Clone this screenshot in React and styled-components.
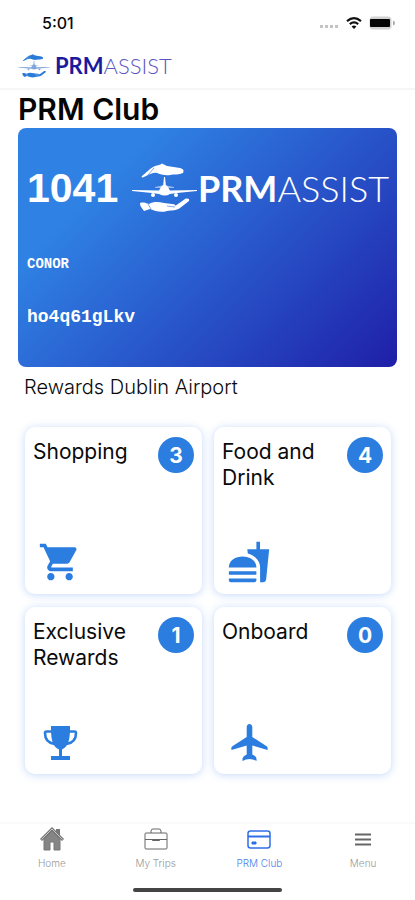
import React from 'react';
import styled, { createGlobalStyle } from 'styled-components';
import { MdShoppingCart, MdFastfood } from 'react-icons/md';

const BLUE = '#2b7de0';
const SANS = "Inter, 'Liberation Sans', sans-serif";

const GlobalStyle = createGlobalStyle`
  *, *::before, *::after { box-sizing: border-box; }
  body { margin: 0; background: #fff; color: #0a0a0a; font-family: ${SANS}; }
  button { font: inherit; color: inherit; }
`;

const Screen = styled.div`
  display: flex;
  flex-direction: column;
  min-height: 100vh;
`;

const StatusBar = styled.div`
  display: flex;
  align-items: center;
  justify-content: space-between;
  height: 46px;
  padding: 0 20px 0 42px;
`;

const Clock = styled.time`
  font-size: 16px;
  font-weight: 500;
`;

const StatusIcons = styled.div`
  display: flex;
  align-items: center;
  gap: 7px;
  svg { display: block; }
  svg:first-child { margin-top: 8px; }
`;

const Header = styled.header`
  display: flex;
  align-items: center;
  height: 44px;
  padding: 0 18px 2px;
  border-bottom: 2px solid #f6f6f7;
`;

const Brand = styled.div`
  display: flex;
  align-items: center;
  gap: ${(p) => (p.$large ? 0 : 5)}px;
  svg { display: block; flex: none; }
`;

const Wordmark = styled.span`
  font-family: Lato, 'Open Sans', sans-serif;
  font-size: ${(p) => (p.$large ? 36 : 22)}px;
  line-height: ${(p) => (p.$large ? 44 : 28)}px;
  font-weight: 300;
  color: ${(p) => (p.$large ? '#fff' : '#5a55c0')};
  strong { font-weight: 700; color: ${(p) => (p.$large ? '#fff' : '#1a1a9c')}; }
`;

const Main = styled.main`
  flex: 1;
  padding: 0 18px 24px;
`;

const Title = styled.h1`
  margin: 0;
  font-size: 30px;
  line-height: 38px;
  font-weight: 600;
  color: #050505;
`;

const MemberCard = styled.section`
  display: flex;
  flex-direction: column;
  height: 239px;
  padding: 35px 8px 0 9px;
  border-radius: 8px;
  background: linear-gradient(135deg, #2f82e4 0%, #2f82e4 22%, #2a5fd0 50%, #1f1fa8 100%);
  color: #fff;
`;

const CardTop = styled.div`
  display: flex;
  align-items: center;
  justify-content: space-between;
  height: 50px;
`;

const Points = styled.span`
  font-family: 'Liberation Sans', Arial, sans-serif;
  font-size: 41px;
  line-height: 50px;
  font-weight: 700;
`;

const CardText = styled.p`
  margin: ${(p) => (p.$code ? 32 : 42)}px 0 0;
  font-family: 'Courier New', 'Liberation Mono', monospace;
  font-weight: 700;
  font-size: ${(p) => (p.$code ? 18 : 14)}px;
  line-height: ${(p) => (p.$code ? 24 : 18)}px;
`;

const SectionTitle = styled.h2`
  margin: 6px 6px 0;
  font-size: 20px;
  line-height: 28px;
  font-weight: 300;
`;

const Grid = styled.div`
  display: grid;
  grid-template-columns: 1fr 1fr;
  gap: 13px 12px;
  margin: 26px 6px 0 7px;
`;

const Tile = styled.button`
  display: flex;
  flex-direction: column;
  justify-content: space-between;
  min-height: 167px;
  padding: 10px 8px;
  border: 0;
  border-radius: 10px;
  background: #fff;
  box-shadow: 0 1px 8px rgba(60, 130, 235, 0.3);
  text-align: left;
`;

const TileHead = styled.span`
  display: flex;
  align-items: flex-start;
  justify-content: space-between;
  width: 100%;
`;

const TileName = styled.span`
  flex: 1;
  padding-top: 2px;
  font-size: 21px;
  line-height: 26px;
  font-weight: 400;
`;

const Count = styled.span`
  display: grid;
  place-items: center;
  flex: none;
  width: 36px;
  height: 36px;
  border-radius: 50%;
  background: ${BLUE};
  color: #fff;
  font-size: 21px;
  font-weight: 700;
`;

const TileIcon = styled.span`
  display: flex;
  padding: 0 5px;
  color: ${BLUE};
  svg { display: block; width: 44px; height: 44px; }
`;

const TabBar = styled.nav`
  display: grid;
  grid-template-columns: repeat(4, 1fr);
  height: 66px;
  border-top: 2px solid #fafafa;
`;

const Tab = styled.a`
  display: flex;
  flex-direction: column;
  align-items: center;
  gap: 4px;
  padding-top: 2px;
  color: ${(p) => (p.$active ? '#4a80ee' : '#999')};
  font-size: 10px;
  line-height: 14px;
  font-weight: 300;
  text-decoration: none;
  svg { display: block; width: 26px; height: 26px; color: ${(p) => (p.$active ? '#2f6fe8' : '#666')}; }
`;

const HomeIndicator = styled.div`
  width: 36%;
  height: 4px;
  margin: 0 auto 8px;
  border-radius: 2px;
  background: #444;
`;

function BrandMark({ width, height, plane, hands }) {
  return (
    <svg width={width} height={height} viewBox="0 0 67 50" aria-hidden="true">
      <g fill={hands}>
        <path d="M11 13 C15 10 19 5 24 3 C27 2 29 2 31 0.500 L36 3 L49 5 C53 6 53 8 52 10 C48 12 43 11 39 12 C34 13 29 11 26 10 C21 9 18 12 13 14 C11 15 10 14 11 13Z" />
        <path d="M9 40 C13 39 14 40 18 41 C23 38 28 39 33 40 L41 41 C44 41 45 42 44 43 L47 41 L54 36 C57 35 59 36 58 38 L49 45 C45 48 41 47 36 48 C30 50 24 48 19 46 L13 48 C12 46 9 44 9 40Z" />
      </g>
      <path d="M23 5 L17 12 M17 41 L20 46 M36 43 L44 44" fill="none" stroke={plane === '#fff' ? '#2d6fd9' : '#fff'} strokeWidth="0.6" />
      <g fill={plane}>
        <path d="M33 14 L34 14 L34.800 22 Q38 24 39 27.500 L66 27 L66 28 L46 30 L39 31 Q34 34 28 31 L21 30 L1 28 L1 27 L28 27.500 Q29 24 32.200 22Z" />
        <circle cx="22" cy="32" r="2" />
        <circle cx="45" cy="32" r="2" />
        <path d="M24 24 L33 22 L43 24 L43 25 L24 25Z" opacity="0.500" />
      </g>
    </svg>
  );
}

function Trophy() {
  return (
    <svg viewBox="0 0 44 44" fill="none" aria-hidden="true">
      <path d="M13 6h19v3c0 11-2 18-8 20.500V36H32v4H13v-4h8v-6.500C15 27 13 20 13 9z" fill="currentColor" />
      <path d="M14 11.500H8.500Q7 11.500 7 13c0 6 3 10 9.500 11M31 11.500h5.500Q38 11.500 38 13c0 6-3 10-9.500 11" stroke="currentColor" strokeWidth="2.600" />
    </svg>
  );
}

function Plane() {
  return (
    <svg viewBox="0 0 44 44" fill="currentColor" aria-hidden="true">
      <path d="M22.500 4C24.300 4 25.300 5.300 25.300 7.200V17L40 26.500Q41 27.500 40.500 30L25.300 25.500V34.500Q29 36 29.500 38.500V41Q26 39 22.500 39T15.500 41V38.500Q16 36 19.700 34.500V25.500L4.500 30Q4 27.500 5 26.500L19.700 17V7.200C19.700 5.300 20.700 4 22.500 4Z" />
    </svg>
  );
}

function HomeIcon() {
  return (
    <svg viewBox="0 0 26 26" fill="none" aria-hidden="true">
      <path d="M17 3h4v7l-4-3z" fill="#777" />
      <path d="M5 13l8-8 8 8v11h-6v-8h-4v8H5z" fill="#858585" stroke="#777" />
      <path d="M2 14L13 3l11 11" stroke="#777" strokeWidth="3" />
      <path d="M2.500 13.500L13 3l10.500 10.500" stroke="#ddd" strokeWidth="0.800" />
    </svg>
  );
}

function CaseIcon() {
  return (
    <svg viewBox="0 0 26 26" fill="none" stroke="currentColor" aria-hidden="true">
      <rect x="2" y="7" width="22" height="16" rx="1" />
      <path d="M8 7V5q0-2 2-2h6q2 0 2 2v2M2 13.500h8M16 13.500h8" />
      <path d="M9.500 13.500h7v1h-7z" fill="currentColor" />
    </svg>
  );
}

function CardIcon() {
  return (
    <svg viewBox="0 0 26 26" fill="none" stroke="currentColor" aria-hidden="true">
      <rect x="2" y="5" width="22" height="17" rx="2.500" strokeWidth="1.500" />
      <path d="M2 10.500h22" strokeWidth="2" />
      <path d="M6 16h4v2H6z" fill="currentColor" />
    </svg>
  );
}

function MenuIcon() {
  return (
    <svg viewBox="0 0 26 26" stroke="currentColor" strokeWidth="1.800" aria-hidden="true">
      <path d="M5 8.500h16M5 13.500h16M5 18.500h16" />
    </svg>
  );
}

function StatusGlyphs() {
  return (
    <StatusIcons>
      <svg width="19" height="4" viewBox="0 0 19 4" fill="#c4c4c4" aria-hidden="true">
        <rect width="3" height="3" /><rect x="5" width="3" height="3" />
        <rect x="10" width="3" height="3" /><rect x="15" width="3" height="3" />
      </svg>
      <svg width="16" height="12" viewBox="0 0 16 12" fill="none" stroke="#111" strokeWidth="2.200" aria-hidden="true">
        <path d="M1 4.200Q8-1.800 15 4.200M3.800 7.200Q8 3.600 12.200 7.200" />
        <path d="M8 12L5.600 9.500Q8 7.600 10.400 9.500Z" fill="#111" stroke="none" />
      </svg>
      <svg width="26" height="14" viewBox="0 0 26 14" aria-hidden="true">
        <rect x="0.500" y="0.500" width="22" height="13" rx="3.500" fill="#d2d2d2" />
        <rect x="1" y="3" width="20" height="8" rx="1" fill="#050505" />
        <path d="M24 4.500q2 0.500 2 2.500t-2 2.500z" fill="#aaa" />
      </svg>
    </StatusIcons>
  );
}

const REWARDS = [
  { name: 'Shopping', count: 3, icon: <MdShoppingCart /> },
  { name: 'Food and Drink', count: 4, icon: <MdFastfood /> },
  { name: 'Exclusive Rewards', count: 1, icon: <Trophy /> },
  { name: 'Onboard', count: 0, icon: <Plane /> },
];

const TABS = [
  { label: 'Home', icon: <HomeIcon /> },
  { label: 'My Trips', icon: <CaseIcon /> },
  { label: 'PRM Club', icon: <CardIcon />, active: true },
  { label: 'Menu', icon: <MenuIcon /> },
];

export default function App() {
  return (
    <Screen>
      <GlobalStyle />
      <StatusBar>
        <Clock>5:01</Clock>
        <StatusGlyphs />
      </StatusBar>
      <Header>
        <Brand>
          <BrandMark width={32} height={32} plane="#7fa6dc" hands="#2a7bd8" />
          <Wordmark><strong>PRM</strong>ASSIST</Wordmark>
        </Brand>
      </Header>
      <Main>
        <Title>PRM Club</Title>
        <MemberCard>
          <CardTop>
            <Points>1041</Points>
            <Brand $large>
              <BrandMark width={67} height={50} plane="#fff" hands="#fff" />
              <Wordmark $large><strong>PRM</strong>ASSIST</Wordmark>
            </Brand>
          </CardTop>
          <CardText>CONOR</CardText>
          <CardText $code>ho4q61gLkv</CardText>
        </MemberCard>
        <SectionTitle>Rewards Dublin Airport</SectionTitle>
        <Grid>
          {REWARDS.map((r) => (
            <Tile key={r.name} type="button">
              <TileHead>
                <TileName>{r.name}</TileName>
                <Count>{r.count}</Count>
              </TileHead>
              <TileIcon>{r.icon}</TileIcon>
            </Tile>
          ))}
        </Grid>
      </Main>
      <TabBar>
        {TABS.map((t) => (
          <Tab key={t.label} href="#" $active={t.active} aria-current={t.active ? 'page' : undefined}>
            {t.icon}
            {t.label}
          </Tab>
        ))}
      </TabBar>
      <HomeIndicator />
    </Screen>
  );
}
